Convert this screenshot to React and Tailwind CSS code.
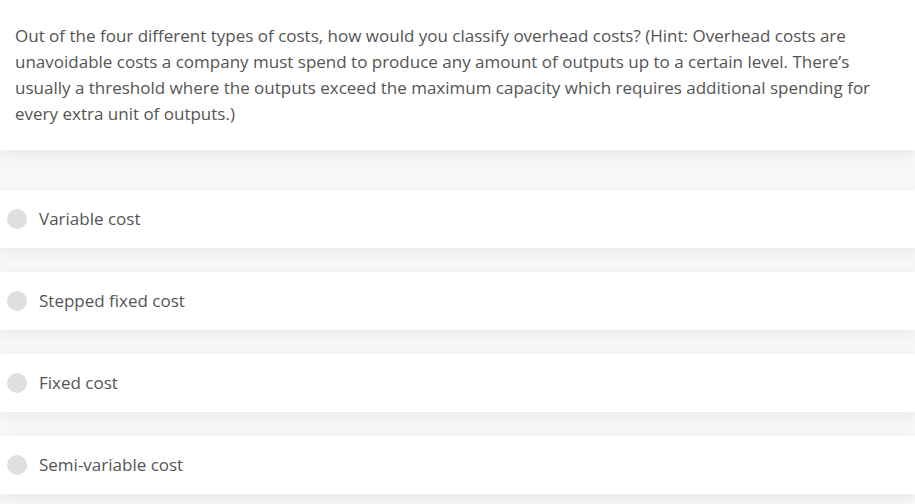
import React from "react";

const questionLines = [
  "Out of the four different types of costs, how would you classify overhead costs? (Hint: Overhead costs are",
  "unavoidable costs a company must spend to produce any amount of outputs up to a certain level. There\u2019s",
  "usually a threshold where the outputs exceed the maximum capacity which requires additional spending for",
  "every extra unit of outputs.)",
];

const options = ["Variable cost", "Stepped fixed cost", "Fixed cost", "Semi-variable cost"];

export default function App() {
  return (
    <div
      className="min-h-[504px] w-[915px] bg-[#f6f7f8] text-[#545454] overflow-hidden"
      style={{ fontFamily: '"Open Sans", "Noto Sans", sans-serif' }}
    >
      {/* question */}
      <div className="bg-white px-[15px] pt-[23px] pb-[23px] shadow-[0_4px_14px_rgba(0,0,0,0.06)]">
        {questionLines.map((line) => (
          <div key={line} className="text-[17px] leading-[26px] whitespace-nowrap">
            {line}
          </div>
        ))}
      </div>

      {/* answer options */}
      <div className="flex flex-col gap-6 pt-10">
        {options.map((opt) => (
          <div
            key={opt}
            className="flex h-[58px] items-center bg-white pl-[7px] shadow-[0_4px_14px_rgba(0,0,0,0.06)]"
          >
            <span className="h-5 w-5 rounded-full bg-[#dedfe1]" />
            <span className="ml-3 text-[17px]">{opt}</span>
          </div>
        ))}
      </div>
    </div>
  );
}
